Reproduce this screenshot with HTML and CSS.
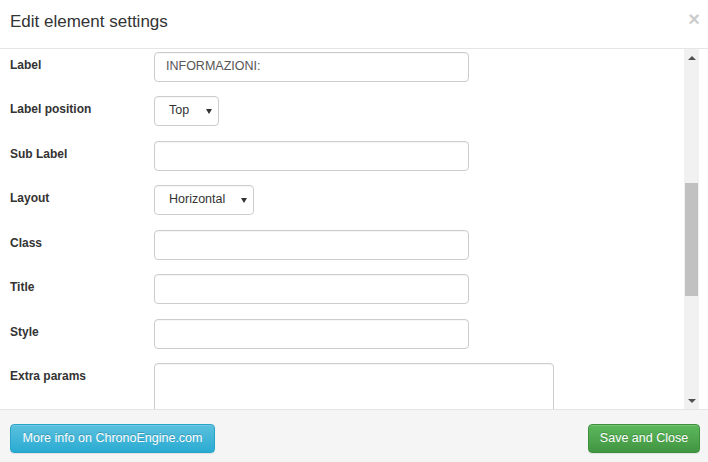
FILE: index.html
```html
<!DOCTYPE html>
<html>
<head>
<meta charset="utf-8">
<title>Edit element settings</title>
<link rel="stylesheet" href="styles.css">
</head>
<body>
<div class="modal">
  <div class="modal-header">
    <h4 class="modal-title">Edit element settings</h4>
    <span class="close">×</span>
  </div>
  <div class="modal-body">
    <div class="form">
      <div class="row">
        <label class="control-label">Label</label>
        <div class="input text-input">INFORMAZIONI:</div>
      </div>
      <div class="row">
        <label class="control-label">Label position</label>
        <div class="input select select-top"><span>Top</span><i class="caret"></i></div>
      </div>
      <div class="row">
        <label class="control-label">Sub Label</label>
        <div class="input text-input"></div>
      </div>
      <div class="row">
        <label class="control-label">Layout</label>
        <div class="input select select-layout"><span>Horizontal</span><i class="caret"></i></div>
      </div>
      <div class="row">
        <label class="control-label">Class</label>
        <div class="input text-input"></div>
      </div>
      <div class="row">
        <label class="control-label">Title</label>
        <div class="input text-input"></div>
      </div>
      <div class="row">
        <label class="control-label">Style</label>
        <div class="input text-input"></div>
      </div>
      <div class="row">
        <label class="control-label">Extra params</label>
        <div class="input textarea"></div>
      </div>
    </div>
    <div class="scrollbar">
      <div class="sb-btn"><i class="sb-up"></i></div>
      <div class="sb-thumb"></div>
      <div class="sb-btn sb-bottom"><i class="sb-down"></i></div>
    </div>
  </div>
  <div class="modal-footer">
    <button class="btn btn-info">More info on ChronoEngine.com</button>
    <button class="btn btn-success">Save and Close</button>
  </div>
</div>
</body>
</html>
```

FILE: styles.css
```css
html, body {
  margin: 0;
  padding: 0;
  background: #fff;
}
body {
  font-family: "Liberation Sans", Arial, sans-serif;
  color: #333;
  width: 708px;
  height: 462px;
  overflow: hidden;
}
.modal {
  display: flex;
  flex-direction: column;
  height: 462px;
}
.modal-header {
  height: 48px;
  border-bottom: 1px solid #e5e5e5;
  display: flex;
  align-items: flex-start;
  justify-content: space-between;
  flex: none;
}
.modal-title {
  margin: 0;
  padding: 12px 0 0 10px;
  font-size: 17px;
  font-weight: normal;
  line-height: 20px;
  color: #333;
}
.close {
  font-size: 20px;
  font-weight: bold;
  line-height: 20px;
  color: #000;
  opacity: 0.2;
  margin: 9px 8px 0 0;
}
.modal-body {
  flex: none;
  height: 360px;
  display: flex;
  overflow: hidden;
  padding-right: 9px;
}
.form {
  flex: 1;
  padding-top: 3px;
  overflow: hidden;
}
.row {
  display: flex;
  align-items: flex-start;
  margin-bottom: 14.43px;
}
.control-label {
  width: 144px;
  padding: 5px 0 0 10px;
  font-size: 12px;
  font-weight: bold;
  line-height: 17px;
  color: #333;
  flex: none;
}
.input {
  box-sizing: border-box;
  height: 30px;
  border: 1px solid #ccc;
  border-radius: 4px;
  background: #fff;
  font-size: 12.5px;
  color: #555;
  display: flex;
  align-items: center;
  padding: 0 12px 3px 11px;
  box-shadow: inset 0 1px 1px rgba(0,0,0,0.04);
}
.text-input {
  width: 315px;
}
.select {
  justify-content: space-between;
  padding: 0 6px 2px 14px;
  color: #333;
}
.select-top { width: 65px; }
.select-layout { width: 100px; }
.caret {
  width: 0;
  height: 0;
  border-left: 3px solid transparent;
  border-right: 3px solid transparent;
  border-top: 5px solid #333;
  margin-top: 3px;
}
.textarea {
  width: 400px;
  height: 60px;
}
.scrollbar {
  flex: none;
  width: 15px;
  background: #f1f1f1;
  display: flex;
  flex-direction: column;
  align-items: center;
}
.sb-btn {
  height: 17px;
  width: 15px;
  display: flex;
  align-items: center;
  justify-content: center;
  flex: none;
}
.sb-bottom {
  margin-top: auto;
}
.sb-up {
  width: 0;
  height: 0;
  border-left: 4px solid transparent;
  border-right: 4px solid transparent;
  border-bottom: 4px solid #505050;
}
.sb-down {
  width: 0;
  height: 0;
  border-left: 4px solid transparent;
  border-right: 4px solid transparent;
  border-top: 4px solid #505050;
}
.sb-thumb {
  width: 13px;
  height: 113px;
  background: #c1c1c1;
  margin-top: 117px;
  flex: none;
}
.modal-footer {
  flex: 1;
  background: #f5f5f5;
  border-top: 1px solid #e5e5e5;
  display: flex;
  justify-content: space-between;
  align-items: flex-start;
  padding: 14px 8px 0 10px;
}
.btn {
  height: 29px;
  box-sizing: border-box;
  border-radius: 4px;
  font-family: "Liberation Sans", Arial, sans-serif;
  font-size: 12.5px;
  color: #fff;
  padding: 0 0 1px;
  white-space: nowrap;
  text-align: center;
  border: 1px solid transparent;
  text-shadow: 0 -1px 0 rgba(0,0,0,0.2);
  box-shadow: inset 0 1px 0 rgba(255,255,255,0.15), 0 1px 1px rgba(0,0,0,0.075);
}
.btn-info {
  width: 205px;
  background: linear-gradient(to bottom, #5bc0de 0%, #2aabd2 100%);
  border-color: #28a4c9;
}
.btn-success {
  width: 112px;
  background: linear-gradient(to bottom, #5cb85c 0%, #419641 100%);
  border-color: #3e8f3e;
}
```
